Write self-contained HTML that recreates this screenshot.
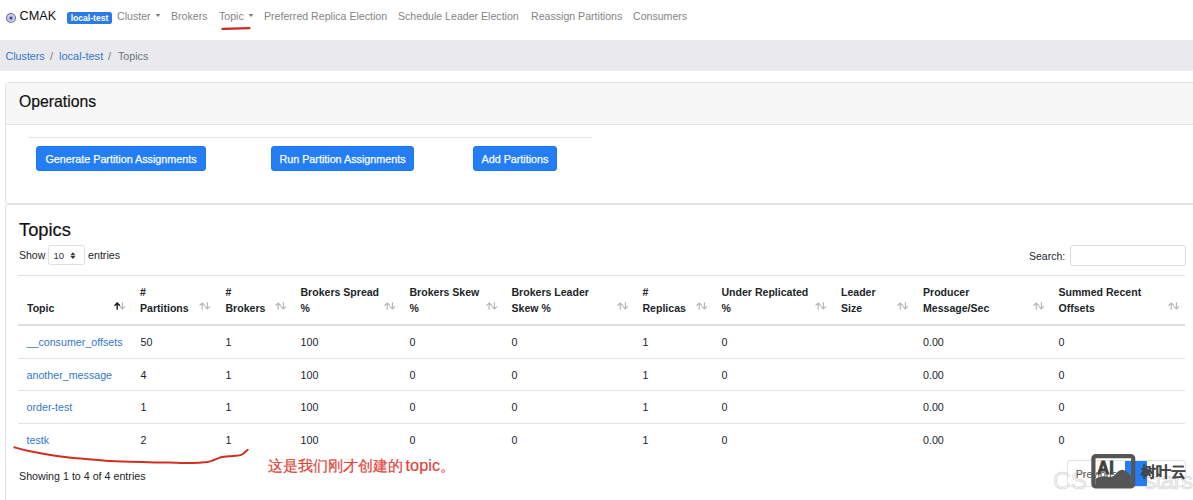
<!DOCTYPE html>
<html><head><meta charset="utf-8">
<style>
*{box-sizing:border-box}
html,body{margin:0;padding:0}
body{width:1193px;height:500px;overflow:hidden;position:relative;background:#fff;font-family:"Liberation Sans",sans-serif;font-size:10.6px;color:#212529}
.a{position:absolute;white-space:nowrap}
.nav{color:#848484;font-size:10.6px;top:9.8px;line-height:12px}
.bc{top:50px;font-size:10.7px;line-height:12px}
.link{color:#3577c9}
.card{position:absolute;left:5px;width:1300px;border:1px solid #e3e3e3;border-radius:3px;background:#fff}
.btn{-webkit-text-stroke:0.25px #fff;position:absolute;top:146px;height:25px;background:#237df5;border:1px solid #1e76ec;border-radius:3px;color:#fff;font-size:10.75px;line-height:24.5px;text-align:center}
th,td{padding:0}
.hd{position:absolute;font-weight:bold;font-size:10.55px;line-height:16px;color:#212529;white-space:nowrap}
.cell{position:absolute;font-size:10.7px;line-height:12px;white-space:nowrap}
.sort{position:absolute;top:302.3px;width:12px;height:8px}
.rowb{position:absolute;left:18px;width:1167px;height:1px;background:#e3e3e3}
</style></head><body>

<!-- navbar -->
<svg class="a" style="left:5.3px;top:12.3px" width="12" height="12" viewBox="0 0 12 12"><circle cx="6" cy="6" r="4.5" fill="#d3d2f1" stroke="#74729a" stroke-width="1.1"/><circle cx="6" cy="6" r="2.6" fill="#b3b1e0"/><circle cx="6" cy="6" r="1.5" fill="#7f7dbd"/><circle cx="6" cy="6" r="0.9" fill="#1d1b50"/></svg>
<div class="a" style="left:19.5px;top:9.1px;font-size:12.7px;line-height:14px;color:#111">CMAK</div>
<div class="a" style="left:67px;top:12px;width:45px;height:12px;background:#2a7be4;border-radius:2.5px;color:#fff;font-weight:bold;font-size:8.6px;line-height:12.6px;text-align:center">local-test</div>
<div class="a nav" style="left:117px">Cluster</div>
<svg class="a" style="left:155px;top:13px" width="6" height="5" viewBox="0 0 6 5"><path d="M0.6 0.9 L5.4 0.9 L3 3.9 Z" fill="#7d7d7d"/></svg>
<div class="a nav" style="left:171px">Brokers</div>
<div class="a nav" style="left:219px">Topic</div>
<svg class="a" style="left:247.8px;top:13px" width="6" height="5" viewBox="0 0 6 5"><path d="M0.6 0.9 L5.4 0.9 L3 3.9 Z" fill="#7d7d7d"/></svg>
<div class="a nav" style="left:264px">Preferred Replica Election</div>
<div class="a nav" style="left:398px">Schedule Leader Election</div>
<div class="a nav" style="left:531px">Reassign Partitions</div>
<div class="a nav" style="left:633px">Consumers</div>
<svg class="a" style="left:0;top:0" width="300" height="40" viewBox="0 0 300 40"><path d="M222.5 28.9 L249.5 28.1" stroke="#c9291f" stroke-width="2.2" fill="none" stroke-linecap="round"/></svg>

<!-- breadcrumb -->
<div class="a" style="left:0;top:40px;width:1193px;height:31px;background:#e9e9ee"></div>
<div class="a bc link" style="left:5.5px">Clusters</div>
<div class="a bc" style="left:50px;color:#777">/</div>
<div class="a bc link" style="left:59px;font-size:11.05px">local-test</div>
<div class="a bc" style="left:108px;color:#777">/</div>
<div class="a bc" style="left:118px;color:#6c757d">Topics</div>

<!-- operations card -->
<div class="card" style="top:82px;height:122px">
  <div style="height:42px;background:#f7f7f7;border-bottom:1px solid #e1e1e1"></div>
</div>
<div class="a" style="left:19px;top:93px;font-size:15.75px;line-height:18px;color:#111;-webkit-text-stroke:0.2px #111">Operations</div>
<div class="a" style="left:28px;top:137px;width:564px;height:1px;background:#e6e6e6"></div>
<div class="btn" style="left:36px;width:170px">Generate Partition Assignments</div>
<div class="btn" style="left:271px;width:143px">Run Partition Assignments</div>
<div class="btn" style="left:473px;width:84px">Add Partitions</div>

<!-- topics card -->
<div class="card" style="top:204px;height:400px"></div>
<div class="a" style="left:19px;top:219.5px;font-size:18.3px;line-height:20px;color:#111;-webkit-text-stroke:0.2px #111">Topics</div>
<div class="a" style="left:19px;top:249px;font-size:10.5px;line-height:12px">Show</div>
<div class="a" style="left:48.4px;top:245.3px;width:36.3px;height:20px;border:1px solid #e0e0e0;border-radius:2.5px"></div>
<div class="a" style="left:53.5px;top:249.8px;font-size:9.6px;line-height:12px;color:#333">10</div>
<svg class="a" style="left:70.4px;top:252px" width="6" height="8" viewBox="0 0 6 8"><path d="M0.4 3.2 L2.9 0.3 L5.4 3.2 Z M0.4 4.1 L2.9 7 L5.4 4.1 Z" fill="#333"/></svg>
<div class="a" style="left:88px;top:249px;font-size:10.7px;line-height:12px">entries</div>
<div class="a" style="left:1029px;top:249.5px;font-size:10.5px;line-height:12px">Search:</div>
<div class="a" style="left:1070px;top:245px;width:116px;height:21px;border:1px solid #dcdcdc;border-radius:3px"></div>

<!-- table lines -->
<div class="rowb" style="top:275px"></div>
<div class="rowb" style="top:324px;height:2px;background:#dedede"></div>
<div class="rowb" style="top:357.5px"></div>
<div class="rowb" style="top:390px"></div>
<div class="rowb" style="top:422.5px"></div>

<!-- headers -->
<div class="hd" style="left:27px;top:300px">Topic</div>
<div class="hd" style="left:140px;top:284px">#<br>Partitions</div>
<div class="hd" style="left:225.5px;top:284px">#<br>Brokers</div>
<div class="hd" style="left:300.5px;top:284px">Brokers Spread<br>%</div>
<div class="hd" style="left:409.5px;top:284px">Brokers Skew<br>%</div>
<div class="hd" style="left:511.5px;top:284px">Brokers Leader<br>Skew %</div>
<div class="hd" style="left:642.5px;top:284px">#<br>Replicas</div>
<div class="hd" style="left:721.5px;top:284px">Under Replicated<br>%</div>
<div class="hd" style="left:841px;top:284px">Leader<br>Size</div>
<div class="hd" style="left:923px;top:284px">Producer<br>Message/Sec</div>
<div class="hd" style="left:1058.5px;top:284px">Summed Recent<br>Offsets</div>

<!-- sort icons -->
<svg class="sort" style="left:114px" viewBox="0 0 12 8"><path d="M3.2 7.8 V1 M0.5 3.7 L3.2 1 L5.9 3.7" fill="none" stroke="#1a1a1a" stroke-width="1.4"/><path d="M8.4 0.2 V7 M5.8 4.4 L8.4 7 L11 4.4" fill="none" stroke="#b4b4b4" stroke-width="1.1"/></svg>
<svg class="sort" style="left:199px" viewBox="0 0 12 8"><path d="M3.2 7.8 V1 M0.5 3.7 L3.2 1 L5.9 3.7" fill="none" stroke="#b4b4b4" stroke-width="1.2"/><path d="M8.4 0.2 V7 M5.8 4.4 L8.4 7 L11 4.4" fill="none" stroke="#b4b4b4" stroke-width="1.1"/></svg>
<svg class="sort" style="left:275px" viewBox="0 0 12 8"><path d="M3.2 7.8 V1 M0.5 3.7 L3.2 1 L5.9 3.7" fill="none" stroke="#b4b4b4" stroke-width="1.2"/><path d="M8.4 0.2 V7 M5.8 4.4 L8.4 7 L11 4.4" fill="none" stroke="#b4b4b4" stroke-width="1.1"/></svg>
<svg class="sort" style="left:383.5px" viewBox="0 0 12 8"><path d="M3.2 7.8 V1 M0.5 3.7 L3.2 1 L5.9 3.7" fill="none" stroke="#b4b4b4" stroke-width="1.2"/><path d="M8.4 0.2 V7 M5.8 4.4 L8.4 7 L11 4.4" fill="none" stroke="#b4b4b4" stroke-width="1.1"/></svg>
<svg class="sort" style="left:485.5px" viewBox="0 0 12 8"><path d="M3.2 7.8 V1 M0.5 3.7 L3.2 1 L5.9 3.7" fill="none" stroke="#b4b4b4" stroke-width="1.2"/><path d="M8.4 0.2 V7 M5.8 4.4 L8.4 7 L11 4.4" fill="none" stroke="#b4b4b4" stroke-width="1.1"/></svg>
<svg class="sort" style="left:616.5px" viewBox="0 0 12 8"><path d="M3.2 7.8 V1 M0.5 3.7 L3.2 1 L5.9 3.7" fill="none" stroke="#b4b4b4" stroke-width="1.2"/><path d="M8.4 0.2 V7 M5.8 4.4 L8.4 7 L11 4.4" fill="none" stroke="#b4b4b4" stroke-width="1.1"/></svg>
<svg class="sort" style="left:695.5px" viewBox="0 0 12 8"><path d="M3.2 7.8 V1 M0.5 3.7 L3.2 1 L5.9 3.7" fill="none" stroke="#b4b4b4" stroke-width="1.2"/><path d="M8.4 0.2 V7 M5.8 4.4 L8.4 7 L11 4.4" fill="none" stroke="#b4b4b4" stroke-width="1.1"/></svg>
<svg class="sort" style="left:815px" viewBox="0 0 12 8"><path d="M3.2 7.8 V1 M0.5 3.7 L3.2 1 L5.9 3.7" fill="none" stroke="#b4b4b4" stroke-width="1.2"/><path d="M8.4 0.2 V7 M5.8 4.4 L8.4 7 L11 4.4" fill="none" stroke="#b4b4b4" stroke-width="1.1"/></svg>
<svg class="sort" style="left:897px" viewBox="0 0 12 8"><path d="M3.2 7.8 V1 M0.5 3.7 L3.2 1 L5.9 3.7" fill="none" stroke="#b4b4b4" stroke-width="1.2"/><path d="M8.4 0.2 V7 M5.8 4.4 L8.4 7 L11 4.4" fill="none" stroke="#b4b4b4" stroke-width="1.1"/></svg>
<svg class="sort" style="left:1032.5px" viewBox="0 0 12 8"><path d="M3.2 7.8 V1 M0.5 3.7 L3.2 1 L5.9 3.7" fill="none" stroke="#b4b4b4" stroke-width="1.2"/><path d="M8.4 0.2 V7 M5.8 4.4 L8.4 7 L11 4.4" fill="none" stroke="#b4b4b4" stroke-width="1.1"/></svg>
<svg class="sort" style="left:1168px" viewBox="0 0 12 8"><path d="M3.2 7.8 V1 M0.5 3.7 L3.2 1 L5.9 3.7" fill="none" stroke="#b4b4b4" stroke-width="1.2"/><path d="M8.4 0.2 V7 M5.8 4.4 L8.4 7 L11 4.4" fill="none" stroke="#b4b4b4" stroke-width="1.1"/></svg>

<!-- rows -->
<div class="cell link" style="left:26.5px;top:336px">__consumer_offsets</div>
<div class="cell link" style="left:26.5px;top:368.5px">another_message</div>
<div class="cell link" style="left:26.5px;top:401px">order-test</div>
<div class="cell link" style="left:26.5px;top:433.5px">testk</div>

<div class="cell" style="left:140.5px;top:336px">50</div>
<div class="cell" style="left:140.5px;top:368.5px">4</div>
<div class="cell" style="left:140.5px;top:401px">1</div>
<div class="cell" style="left:140.5px;top:433.5px">2</div>

<div class="cell" style="left:225.5px;top:336px">1</div>
<div class="cell" style="left:225.5px;top:368.5px">1</div>
<div class="cell" style="left:225.5px;top:401px">1</div>
<div class="cell" style="left:225.5px;top:433.5px">1</div>

<div class="cell" style="left:300.5px;top:336px">100</div>
<div class="cell" style="left:300.5px;top:368.5px">100</div>
<div class="cell" style="left:300.5px;top:401px">100</div>
<div class="cell" style="left:300.5px;top:433.5px">100</div>

<div class="cell" style="left:409.5px;top:336px">0</div>
<div class="cell" style="left:409.5px;top:368.5px">0</div>
<div class="cell" style="left:409.5px;top:401px">0</div>
<div class="cell" style="left:409.5px;top:433.5px">0</div>

<div class="cell" style="left:511.5px;top:336px">0</div>
<div class="cell" style="left:511.5px;top:368.5px">0</div>
<div class="cell" style="left:511.5px;top:401px">0</div>
<div class="cell" style="left:511.5px;top:433.5px">0</div>

<div class="cell" style="left:642.5px;top:336px">1</div>
<div class="cell" style="left:642.5px;top:368.5px">1</div>
<div class="cell" style="left:642.5px;top:401px">1</div>
<div class="cell" style="left:642.5px;top:433.5px">1</div>

<div class="cell" style="left:721.5px;top:336px">0</div>
<div class="cell" style="left:721.5px;top:368.5px">0</div>
<div class="cell" style="left:721.5px;top:401px">0</div>
<div class="cell" style="left:721.5px;top:433.5px">0</div>

<div class="cell" style="left:923px;top:336px">0.00</div>
<div class="cell" style="left:923px;top:368.5px">0.00</div>
<div class="cell" style="left:923px;top:401px">0.00</div>
<div class="cell" style="left:923px;top:433.5px">0.00</div>

<div class="cell" style="left:1058.5px;top:336px">0</div>
<div class="cell" style="left:1058.5px;top:368.5px">0</div>
<div class="cell" style="left:1058.5px;top:401px">0</div>
<div class="cell" style="left:1058.5px;top:433.5px">0</div>

<!-- footer -->
<div class="cell" style="left:19px;top:469.8px">Showing 1 to 4 of 4 entries</div>

<!-- annotation -->
<svg class="a" style="left:0;top:440px" width="260" height="30" viewBox="0 440 260 30"><path d="M14.4 447.3 C17.0 448.0 23.3 449.9 30.1 451.3 C36.9 452.7 46.9 454.5 55.3 455.7 C63.7 456.9 72.0 457.8 80.4 458.6 C88.8 459.4 97.2 460.2 105.6 460.7 C114.0 461.2 122.5 461.5 130.7 461.8 C138.9 462.1 148.3 462.3 154.6 462.4 C160.9 462.5 162.2 462.5 168.4 462.6 C174.6 462.7 185.0 463.2 191.5 463.1 C198.0 463.0 203.4 462.4 207.2 461.9 C211.0 461.3 212.2 460.6 214.5 459.8 C216.8 459.0 217.9 458.0 221.0 457.3 C224.1 456.6 229.6 456.3 233.0 455.9 C236.4 455.5 238.9 455.8 241.3 454.8 C243.8 453.8 246.6 450.6 247.7 449.7" stroke="#cf2f22" stroke-width="2" fill="none" stroke-linecap="round"/></svg>
<div class="a" style="left:268px;top:457px;font-size:15px;line-height:17px;color:#e0453a;-webkit-text-stroke:0.2px #e0453a">这是我们刚才创建的<span style="font-size:16.2px;margin-left:2.5px;letter-spacing:0.1px">topic</span>。</div>

<!-- pagination + watermark -->
<div class="a" style="left:1053px;top:467px;font-size:24.5px;line-height:27px;color:#f1f1f1;-webkit-text-stroke:0.6px #d6d6d6">CS</div>
<div class="a" style="left:1144px;top:467px;font-size:24.5px;line-height:27px;color:#f1f1f1;-webkit-text-stroke:0.6px #d6d6d6;letter-spacing:-1px">stars</div>
<div class="a" style="left:1067px;top:460px;width:119px;height:27px;border:1px solid #e3e3e3;border-radius:3px"></div>
<div class="a" style="left:1075.8px;top:467.5px;font-size:10.6px;line-height:12px;color:#555">Previous</div>
<div class="a" style="left:1124.8px;top:460.5px;width:22px;height:25px;background:#237df5"></div>
<svg class="a" style="left:1091px;top:454px" width="45" height="35" viewBox="1091 454 45 35"><path d="M1095.4 479.1 C1097 478 1098 477.2 1099.6 477 C1101.5 476.4 1103 476.2 1104.5 476.3 C1107 476.5 1109 477.3 1110.8 477 C1113 476.6 1114.3 475.5 1115.7 474.2 C1117 472.8 1118 471.3 1119.4 470.8 C1120.5 470.2 1121.5 469.8 1122.5 469.8 C1123.8 469.9 1124.7 470.4 1125.6 471.1 C1127.5 472.5 1129 474 1130.8 475.6 L1130.8 485 L1095.4 485 Z" fill="#555"/><rect x="1093.4" y="456.1" width="39.8" height="30.4" rx="2.5" fill="none" stroke="#555" stroke-width="4.2"/><text x="1097.3" y="473.8" font-family="Liberation Sans" font-weight="bold" font-size="18.5" fill="#404040" stroke="#404040" stroke-width="0.9" textLength="16.5" lengthAdjust="spacingAndGlyphs">AI</text></svg>
<div class="a" style="left:1140.5px;top:463.5px;font-size:14.8px;line-height:17px;font-weight:bold;color:#454545;-webkit-text-stroke:0.1px #454545">树叶云</div>

</body></html>
